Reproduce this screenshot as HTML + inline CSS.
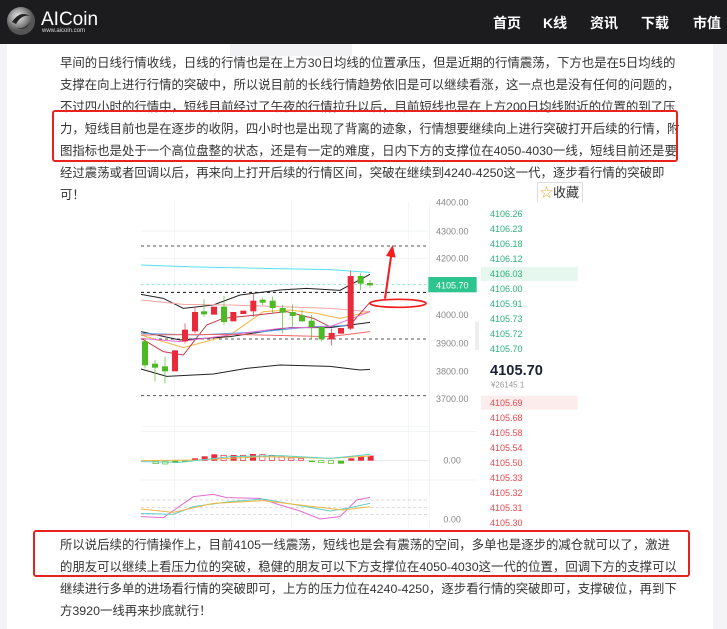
<!DOCTYPE html>
<html><head><meta charset="utf-8">
<style>
*{margin:0;padding:0;box-sizing:border-box}
html,body{width:727px;height:629px;overflow:hidden;background:#f4f4f6;font-family:"Liberation Sans","Noto Sans CJK SC",sans-serif}
.hdr{position:absolute;left:0;top:0;width:727px;height:44px;background:#1c1c1f}
.nav{position:absolute;top:13px;color:#fff;font-size:14px;font-weight:bold}
.page{position:absolute;left:7px;top:44px;width:706px;height:585px;background:#fff}
.p{position:absolute;left:60px;width:625px;font-size:12.4px;color:#333;line-height:22px}
.box{position:absolute;border:2.5px solid #e8221e;border-radius:3px}
</style></head><body>
<div class="hdr">
<svg width="40" height="44" style="position:absolute;left:0;top:0"><defs><radialGradient id="g" cx="40%" cy="35%"><stop offset="0" stop-color="#eee"/><stop offset="1" stop-color="#555"/></radialGradient></defs><circle cx="21" cy="21" r="14" fill="url(#g)"/><path d="M12 22 Q20 10 30 16 Q22 14 16 24Z" fill="#222"/><path d="M16 28 Q24 30 30 22 Q26 32 16 28Z" fill="#333"/></svg>
<div style="position:absolute;left:41px;top:9px;color:#fff;font-size:19px">AICoin</div>
<div style="position:absolute;left:42px;top:28px;color:#ddd;font-size:6px">www.aicoin.com</div>
<div class="nav" style="left:493px">首页</div>
<div class="nav" style="left:543px">K线</div>
<div class="nav" style="left:590px">资讯</div>
<div class="nav" style="left:641px">下载</div>
<div class="nav" style="left:693px">市值</div>
</div>
<div class="page"></div>
<div style="position:absolute;left:230px;top:44px;width:122px;height:12px;background:#f2f2f4"></div>
<div class="p" style="top:52px">早间的日线行情收线，日线的行情也是在上方30日均线的位置承压，但是近期的行情震荡，下方也是在5日均线的支撑在向上进行行情的突破中，所以说目前的长线行情趋势依旧是可以继续看涨，这一点也是没有任何的问题的，不过四小时的行情中，短线目前经过了午夜的行情拉升以后，目前短线也是在上方200日均线附近的位置的到了压力，短线目前也是在逐步的收阴，四小时也是出现了背离的迹象，行情想要继续向上进行突破打开后续的行情，附图指标也是处于一个高位盘整的状态，还是有一定的难度，日内下方的支撑位在4050-4030一线，短线目前还是要经过震荡或者回调以后，再来向上打开后续的行情区间，突破在继续到4240-4250这一代，逐步看行情的突破即可！</div>
<div class="box" style="left:52px;top:110px;width:626px;height:52px"></div>
<div style="position:absolute;left:537px;top:182px;width:46px;height:21px;border:1px solid #ddd;background:#fff;font-size:13px;color:#333;line-height:19px;padding-left:2px"><span style="color:#f5a623">☆</span>收藏</div>
<svg width="727" height="629" style="position:absolute;left:0;top:0">
<g transform="translate(130,195) scale(0.33333)">
<rect x="0" y="20" width="1380" height="990" fill="#fff"/>
<g stroke="#eef0f3" stroke-width="2"><line x1="133" y1="20" x2="133" y2="1000"/><line x1="484" y1="20" x2="484" y2="1000"/><line x1="835" y1="20" x2="835" y2="1000"/><line x1="33" y1="108" x2="895" y2="108"/><line x1="33" y1="190" x2="895" y2="190"/><line x1="33" y1="695" x2="895" y2="695"/><line x1="33" y1="710" x2="1040" y2="710"/><line x1="33" y1="855" x2="1040" y2="855"/><line x1="898" y1="20" x2="898" y2="1000"/></g>
<rect x="1035" y="380" width="12" height="85" fill="#eee"/>
<g stroke="#555" stroke-width="3" stroke-dasharray="9 9"><line x1="33" y1="153" x2="895" y2="153"/><line x1="33" y1="432" x2="895" y2="432"/><line x1="33" y1="602" x2="895" y2="602"/></g>
<line x1="33" y1="292" x2="895" y2="292" stroke="#111" stroke-width="3" stroke-dasharray="9 9"/>
<line x1="33" y1="269" x2="895" y2="269" stroke="#8de8c8" stroke-width="3" stroke-dasharray="8 8"/>
<g fill="none" stroke-width="3">
<polyline stroke="#4fe3f0" points="33,210 200,216 400,220 600,224 720,232"/>
<polyline stroke="#222" points="33,298 100,310 160,340 250,330 330,300 450,285 530,280 630,286 720,238"/>
<polyline stroke="#222" points="33,522 110,544 250,537 350,520 450,510 600,514 690,525 720,523"/>
<polyline stroke="#f2a5a5" points="33,315 160,328 300,330 450,335 600,340 720,350"/>
<polyline stroke="#f5b640" points="33,420 160,458 300,420 400,350 480,345 560,355 630,370 720,350"/>
<polyline stroke="#c0394a" points="33,430 100,470 160,480 230,390 280,370 380,360 470,350 550,370 600,395 660,390 720,322"/>
<polyline stroke="#222" points="33,410 150,435 300,425 480,398 600,398 720,382"/>
<polyline stroke="#59a7f0" points="33,415 200,420 400,410 550,395 650,392"/>
<polyline stroke="#e86ad1" points="33,430 150,440 300,420 450,400 600,395 720,350"/>
<polyline stroke="#e66" points="33,420 300,418 600,425 720,410"/>
</g>
<g stroke-width="2">
<g stroke="#4cba22" fill="#4cba22">
<line x1="45" y1="430" x2="45" y2="520"/><rect x="37" y="440" width="16" height="70"/>
<line x1="75" y1="495" x2="75" y2="560"/><rect x="67" y="507" width="16" height="10"/>
<line x1="105" y1="485" x2="105" y2="565"/><rect x="97" y="515" width="16" height="13"/>
<line x1="222" y1="313" x2="222" y2="365"/><rect x="214" y="350" width="16" height="7"/>
<line x1="282" y1="303" x2="282" y2="390"/><rect x="274" y="336" width="16" height="44"/>
<line x1="398" y1="308" x2="398" y2="330"/><rect x="390" y="315" width="16" height="7"/>
<line x1="428" y1="305" x2="428" y2="355"/><rect x="420" y="318" width="16" height="20"/>
<line x1="458" y1="330" x2="458" y2="415"/><rect x="450" y="340" width="16" height="12"/>
<line x1="488" y1="328" x2="488" y2="395"/><rect x="480" y="352" width="16" height="10"/>
<line x1="516" y1="345" x2="516" y2="380"/><rect x="508" y="362" width="16" height="16"/>
<line x1="545" y1="360" x2="545" y2="430"/><rect x="537" y="378" width="16" height="17"/>
<line x1="575" y1="395" x2="575" y2="440"/><rect x="567" y="397" width="16" height="35"/>
<line x1="692" y1="235" x2="692" y2="285"/><rect x="684" y="244" width="16" height="21"/>
<line x1="720" y1="255" x2="720" y2="278"/><rect x="712" y="265" width="16" height="5"/>
</g>
<g stroke="#ea2a3a" fill="#ea2a3a">
<rect x="127" y="467" width="16" height="61"/>
<line x1="165" y1="385" x2="165" y2="445"/><rect x="157" y="405" width="16" height="33"/>
<line x1="195" y1="335" x2="195" y2="415"/><rect x="187" y="352" width="16" height="56"/>
<rect x="244" y="336" width="16" height="22"/>
<rect x="302" y="352" width="16" height="26"/>
<rect x="332" y="348" width="16" height="8"/>
<line x1="370" y1="295" x2="370" y2="365"/><rect x="362" y="318" width="16" height="30"/>
<line x1="605" y1="400" x2="605" y2="452"/><rect x="597" y="415" width="16" height="17"/>
<rect x="625" y="400" width="16" height="15"/>
<line x1="662" y1="228" x2="662" y2="405"/><rect x="654" y="244" width="16" height="156"/>
</g></g>
<path d="M762 310 L780 185 L768 183 L788 150 L797 188 L786 186 L768 312Z" fill="#f21d1d"/>
<ellipse cx="804" cy="325" rx="84" ry="12" fill="none" stroke="#f21d1d" stroke-width="5"/>
<line x1="33" y1="797" x2="895" y2="797" stroke="#ddd" stroke-width="2"/>
<g fill="#ea2a3a"><rect x="186" y="790" width="18" height="7"/><rect x="215" y="784" width="18" height="13"/><rect x="244" y="778" width="18" height="19"/><rect x="302" y="780" width="18" height="17"/><rect x="360" y="777" width="18" height="20"/><rect x="655" y="790" width="18" height="7"/><rect x="684" y="784" width="18" height="13"/><rect x="713" y="782" width="18" height="15"/></g>
<g fill="none" stroke="#ea2a3a" stroke-width="2"><rect x="273" y="781" width="16" height="15"/><rect x="331" y="781" width="16" height="15"/><rect x="389" y="779" width="16" height="17"/><rect x="418" y="781" width="16" height="15"/><rect x="447" y="785" width="16" height="11"/><rect x="476" y="789" width="16" height="7"/><rect x="505" y="791" width="16" height="5"/></g>
<g fill="none" stroke="#4cba22" stroke-width="2"><rect x="69" y="798" width="16" height="8"/><rect x="98" y="798" width="16" height="9"/><rect x="566" y="797" width="16" height="6"/><rect x="595" y="797" width="16" height="8"/></g>
<g fill="#4cba22"><rect x="127" y="797" width="18" height="7"/><rect x="156" y="797" width="18" height="3"/><rect x="537" y="797" width="18" height="4"/><rect x="624" y="797" width="18" height="9"/></g>
<polyline fill="none" stroke="#f5b640" stroke-width="3" points="33,797 200,795 400,785 600,790 720,783"/>
<polyline fill="none" stroke="#5dd0c8" stroke-width="3" points="33,800 150,802 300,785 450,782 600,790 720,778"/>
<g stroke="#ccc" stroke-width="2" stroke-dasharray="10 6"><line x1="33" y1="915" x2="895" y2="915"/><line x1="33" y1="937" x2="895" y2="937"/><line x1="33" y1="958" x2="895" y2="958"/></g>
<g fill="none" stroke-width="3">
<polyline stroke="#e86ad1" points="33,965 100,968 190,905 250,898 290,908 390,910 450,930 510,948 570,972 630,965 680,915 720,907"/>
<polyline stroke="#5dd0c8" points="33,955 130,958 190,935 300,920 400,912 500,930 600,948 650,940 720,925"/>
<polyline stroke="#f5b640" points="33,942 130,952 250,925 400,917 550,935 640,945 720,935"/>
</g>
<rect x="0" y="1000" width="1380" height="10" fill="#fff"/>
<g font-family="Liberation Sans" font-size="27" fill="#888">
<text x="918" y="118">4300.00</text><text x="918" y="200">4200.00</text><text x="918" y="369">4000.00</text><text x="918" y="455">3900.00</text><text x="918" y="538">3800.00</text><text x="918" y="621">3700.00</text><text x="940" y="806">0.00</text><text x="940" y="983">0.00</text><text x="918" y="32">4400.00</text>
</g>
<rect x="895" y="246" width="145" height="46" fill="#2ec48f"/>
<text x="918" y="280" font-family="Liberation Sans" font-size="27" fill="#fff">4105.70</text>
<rect x="1053" y="216" width="290" height="42" fill="#e6f7f0"/>
<rect x="1053" y="602" width="290" height="42" fill="#fdecec"/>
<g font-family="Liberation Sans" font-size="27" fill="#2bb47a">
<text x="1080" y="66">4106.26</text><text x="1080" y="111">4106.23</text><text x="1080" y="156">4106.18</text><text x="1080" y="201">4106.12</text><text x="1080" y="246">4106.03</text><text x="1080" y="291">4106.00</text><text x="1080" y="336">4105.91</text><text x="1080" y="381">4105.73</text><text x="1080" y="426">4105.72</text><text x="1080" y="471">4105.70</text>
</g>
<text x="1080" y="540" font-family="Liberation Sans" font-size="44" font-weight="bold" fill="#1a2233">4105.70</text>
<text x="1083" y="578" font-family="Liberation Sans" font-size="24" fill="#999">¥26145.1</text>
<g font-family="Liberation Sans" font-size="27" fill="#e8484f">
<text x="1080" y="633">4105.69</text><text x="1080" y="678">4105.68</text><text x="1080" y="723">4105.58</text><text x="1080" y="768">4105.54</text><text x="1080" y="813">4105.50</text><text x="1080" y="858">4105.33</text><text x="1080" y="903">4105.32</text><text x="1080" y="948">4105.31</text><text x="1080" y="993">4105.30</text>
</g>
</g>
</svg>
<div class="p" style="top:534px;width:618px">所以说后续的行情操作上，目前4105一线震荡，短线也是会有震荡的空间，多单也是逐步的减仓就可以了，激进的朋友可以继续上看压力位的突破，稳健的朋友可以下方支撑位在4050-4030这一代的位置，回调下方的支撑可以继续进行多单的进场看行情的突破即可，上方的压力位在4240-4250，逐步看行情的突破即可，支撑破位，再到下方3920一线再来抄底就行！</div>
<div class="box" style="left:33px;top:530px;width:657px;height:47px"></div>
</body></html>
